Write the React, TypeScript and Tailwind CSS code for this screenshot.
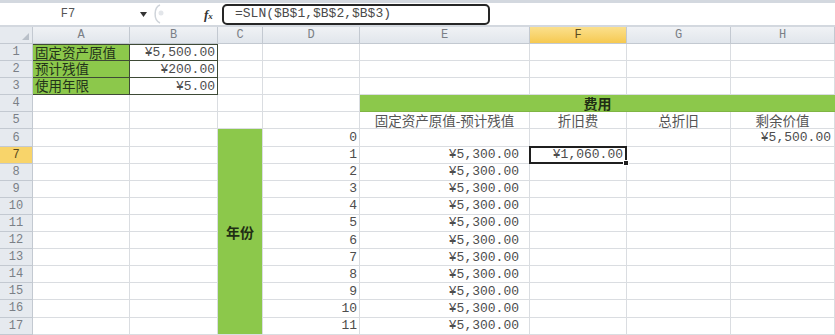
import React from 'react';

const GRID = 'border-r border-b border-[#dadde1]';
const MONO = "font-['Liberation_Mono',monospace]";
const CJK = "font-['Noto_Sans_CJK_SC','Noto_Sans',sans-serif]";

function Cell({ className = '', children }: { className?: string; children?: React.ReactNode }) {
  return (
    <div className={`flex items-center overflow-hidden whitespace-nowrap leading-none ${className}`}>{children}</div>
  );
}

function RowHead({ n, active = false }: { n: number; active?: boolean }) {
  return (
    <Cell
      className={`justify-center border-r border-b border-[#c3c9d1] text-[12px] ${MONO} ${
        active ? 'bg-[#f8d46a] text-[#5a4a1c]' : 'bg-[#e6eaef] text-[#7a7f86]'
      }`}
    >
      {n}
    </Cell>
  );
}

function Num({ children, pr = 'pr-[2px]' }: { children: React.ReactNode; pr?: string }) {
  return (
    <Cell className={`${GRID} justify-end ${pr} ${MONO} text-[13px] text-[#4d4d4d]`}>{children}</Cell>
  );
}

function Blank({ className = '' }: { className?: string }) {
  return <Cell className={`${GRID} ${className}`} />;
}

function Head({ label, active = false }: { label: string; active?: boolean }) {
  return (
    <Cell
      className={`justify-center border-r border-b border-[#c3c9d1] text-[12px] ${MONO} ${
        active ? 'bg-gradient-to-b from-[#fbe08c] to-[#f6c94f] text-[#5a4a1c]' : 'bg-gradient-to-b from-[#f0f2f5] to-[#e1e6ec] text-[#7a7f86]'
      }`}
    >
      {label}
    </Cell>
  );
}

export default function App() {
  const years = [2, 3, 4, 5, 6, 7, 8, 9, 10, 11];
  const labelBox = 'border-r border-b border-[#3e4a36]';

  return (
    <div className={`w-[835px] h-[335px] overflow-hidden bg-white ${CJK}`}>
      {/* 编辑栏 */}
      <div className="h-[27px] bg-[#d3d8df] pt-[3px]">
        <div className="h-[22px] bg-white flex items-center">
          <div className={`w-[136px] text-center text-[12px] text-[#555] ${MONO}`}>F7</div>
          <div className="w-[14px] flex justify-center">
            <svg width="7" height="5" viewBox="0 0 7 5">
              <path d="M0 0h7L3.5 5z" fill="#333" />
            </svg>
          </div>
          <div className="w-[54px] flex items-center">
            <svg width="16" height="20" viewBox="0 0 16 20">
              <path d="M10 1C4 3 3 16 10 19" stroke="#cfd4da" strokeWidth="1.5" fill="none" />
              <circle cx="11" cy="9" r="2.5" fill="#e3e6ea" />
            </svg>
          </div>
          <div className="w-[18px] text-[13px] font-['Liberation_Serif',serif] italic font-bold text-[#333] leading-none">
            f<span className="text-[9px]">x</span>
          </div>
          <div className="w-[268px] h-[21px] border-2 border-[#262626] rounded-[5px] flex items-center pl-[11px]">
            <span className={`${MONO} text-[13px] text-[#4a4a4a]`}>=SLN($B$1,$B$2,$B$3)</span>
          </div>
          <div className="flex-1" />
        </div>
      </div>

      {/* 工作表 */}
      <div className="grid grid-cols-[33px_97px_88px_45px_97px_170px_97px_104px_104px] grid-rows-[17px] auto-rows-[17.1px]">
        {/* 列标题 */}
        <Cell className="border-r border-b border-[#c3c9d1] bg-[#e6eaef] justify-end items-end pr-[3px] pb-[3px]">
          <svg width="7" height="7" viewBox="0 0 7 7">
            <path d="M7 0v7H0z" fill="#b9c0c9" />
          </svg>
        </Cell>
        <Head label="A" />
        <Head label="B" />
        <Head label="C" />
        <Head label="D" />
        <Head label="E" />
        <Head label="F" active />
        <Head label="G" />
        <Head label="H" />

        {/* 1 */}
        <RowHead n={1} />
        <Cell className={`${labelBox} border-t bg-[#8cc84b] pl-[2px] text-[13.5px] text-[#23331a]`}>固定资产原值</Cell>
        <Cell className={`${labelBox} border-t justify-end pr-[2px] ${MONO} text-[13px] text-[#4d4d4d]`}>¥5,500.00</Cell>
        <Blank />
        <Blank />
        <Blank />
        <Blank />
        <Blank />
        <Blank />

        {/* 2 */}
        <RowHead n={2} />
        <Cell className={`${labelBox} bg-[#8cc84b] pl-[2px] text-[13.5px] text-[#23331a]`}>预计残值</Cell>
        <Cell className={`${labelBox} justify-end pr-[2px] ${MONO} text-[13px] text-[#4d4d4d]`}>¥200.00</Cell>
        <Blank />
        <Blank />
        <Blank />
        <Blank />
        <Blank />
        <Blank />

        {/* 3 */}
        <RowHead n={3} />
        <Cell className={`${labelBox} bg-[#8cc84b] pl-[2px] text-[13.5px] text-[#23331a]`}>使用年限</Cell>
        <Cell className={`${labelBox} justify-end pr-[2px] ${MONO} text-[13px] text-[#4d4d4d]`}>¥5.00</Cell>
        <Blank />
        <Blank />
        <Blank />
        <Blank />
        <Blank />
        <Blank />

        {/* 4 */}
        <RowHead n={4} />
        <Blank />
        <Blank />
        <Blank />
        <Blank />
        <Cell className="col-span-4 bg-[#8cc84b] border-b border-[#7fb543] justify-center text-[14px] font-bold text-[#1f2e14]">
          费用
        </Cell>

        {/* 5 */}
        <RowHead n={5} />
        <Blank />
        <Blank />
        <Blank />
        <Blank />
        <Cell className={`${GRID} justify-center text-[13.5px] text-[#555]`}>固定资产原值-预计残值</Cell>
        <Cell className={`${GRID} justify-center text-[13.5px] text-[#555]`}>折旧费</Cell>
        <Cell className={`${GRID} justify-center text-[13.5px] text-[#555]`}>总折旧</Cell>
        <Cell className={`${GRID} justify-center text-[13.5px] text-[#555]`}>剩余价值</Cell>

        {/* 6 */}
        <RowHead n={6} />
        <Blank />
        <Blank />
        <Cell className="row-span-12 bg-[#8cc84b] border-r border-b border-[#dadde1] justify-center text-[14px] font-bold text-[#1f2e14]">
          年份
        </Cell>
        <Num>0</Num>
        <Blank />
        <Blank />
        <Blank />
        <Num pr="pr-[3px]">¥5,500.00</Num>

        {/* 7 */}
        <RowHead n={7} active />
        <Blank />
        <Blank />
        <Num>1</Num>
        <Num pr="pr-[10px]">¥5,300.00</Num>
        {/* 当前选中单元格 */}
        <div className={`${GRID} relative flex items-center justify-end whitespace-nowrap leading-none pr-[3px] ${MONO} text-[13px] text-[#4d4d4d]`}>
          ¥1,060.00
          <div className="absolute -inset-px border-2 border-[#1f1f1f] z-10" />
          <div className="absolute -right-[3px] -bottom-[3px] w-[6px] h-[6px] bg-[#1f1f1f] border border-white z-20" />
        </div>
        <Blank />
        <Blank />

        {/* 8-17 */}
        {years.map((y, i) => (
          <React.Fragment key={y}>
            <RowHead n={i + 8} />
            <Blank />
            <Blank />
            <Num>{y}</Num>
            <Num pr="pr-[10px]">¥5,300.00</Num>
            <Blank />
            <Blank />
            <Blank />
          </React.Fragment>
        ))}
      </div>
    </div>
  );
}
